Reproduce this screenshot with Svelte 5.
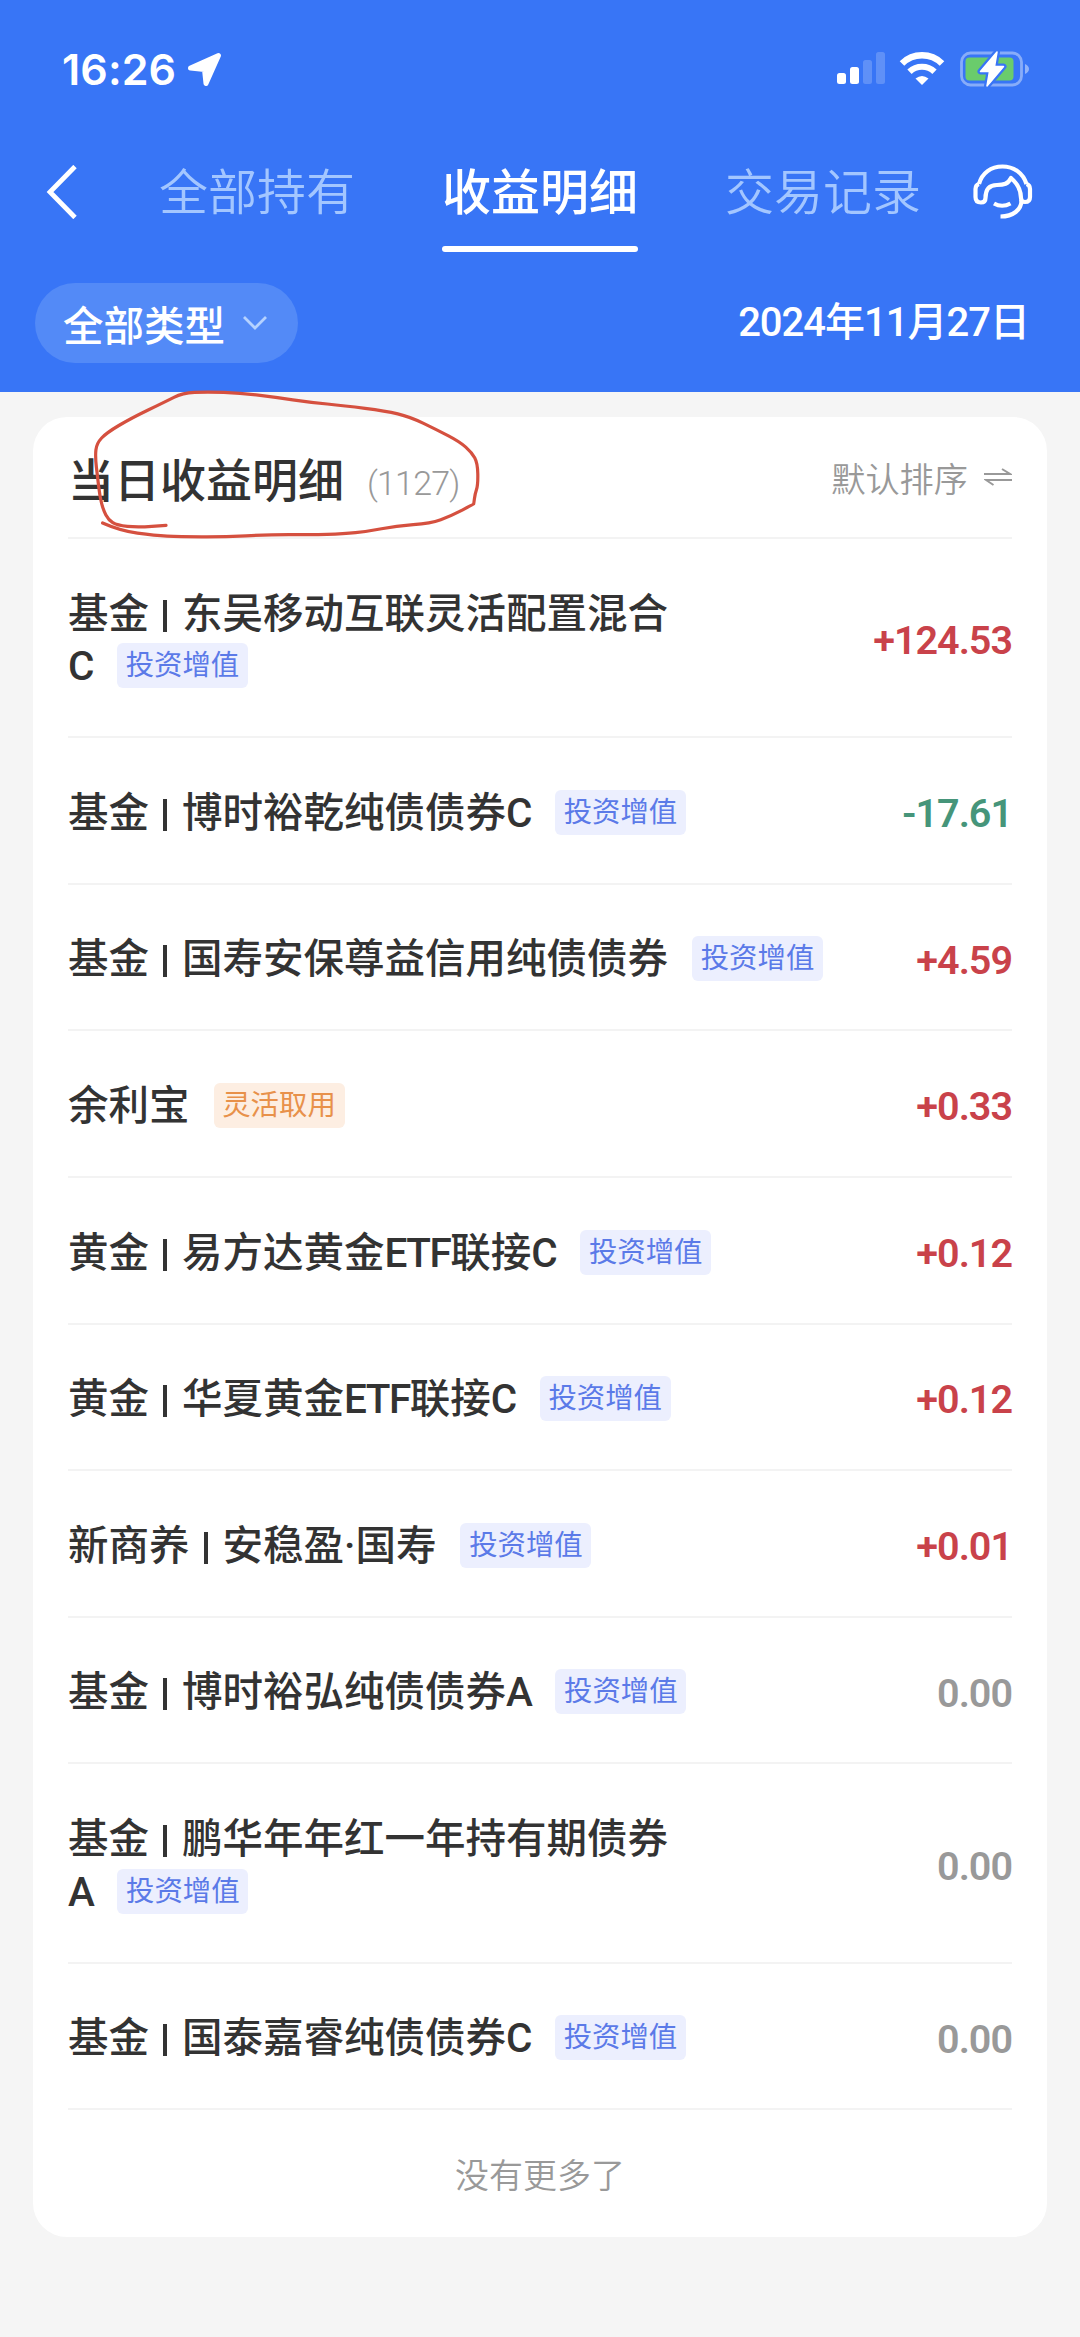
<script>

let { date = "2024年11月27日", total = 1127 } = $props()

let tabs = ["全部持有", "收益明细", "交易记录"]
let g_active_tab = $state("收益明细")

let g_rows = [
    { kind: "基金", name: "东吴移动互联灵活配置混合C", tag: "投资增值", amount: "+124.53" },
    { kind: "基金", name: "博时裕乾纯债债券C", tag: "投资增值", amount: "-17.61" },
    { kind: "基金", name: "国寿安保尊益信用纯债债券", tag: "投资增值", amount: "+4.59" },
    { kind: "", name: "余利宝", tag: "灵活取用", amount: "+0.33" },
    { kind: "黄金", name: "易方达黄金ETF联接C", tag: "投资增值", amount: "+0.12" },
    { kind: "黄金", name: "华夏黄金ETF联接C", tag: "投资增值", amount: "+0.12" },
    { kind: "新商养", name: "安稳盈·国寿", tag: "投资增值", amount: "+0.01" },
    { kind: "基金", name: "博时裕弘纯债债券A", tag: "投资增值", amount: "0.00" },
    { kind: "基金", name: "鹏华年年红一年持有期债券A", tag: "投资增值", amount: "0.00" },
    { kind: "基金", name: "国泰嘉睿纯债债券C", tag: "投资增值", amount: "0.00" }
]

const MAX_NAME = 12

function name_lines(name) {
    if ( name.length > MAX_NAME ) {
        return [name.slice(0,MAX_NAME), name.slice(MAX_NAME)]
    }
    return [name]
}

// latin runs are set a little tighter than the rest
function name_parts(line) {
    return line.split(/([A-Z]+)/).filter((part) => part.length)
}

function trend(amount) {
    if ( amount.startsWith("+") ) return "up"
    if ( amount.startsWith("-") ) return "down"
    return "flat"
}

// pen stroke around the section title
let g_pen_points = [
    [102.6,523],[120,530.7],[155,535.6],[179,536.7],[224,537],[268,534.7],[310,534.7],[344,534],[367,531.4],
    [396,526],[430.5,523.3],[451,516],[473.5,504.3],[473.8,503.8],[475,494],[478,485],[477.6,463],[471.8,452.5],[459.7,441.7],
    [437.3,430],[409.8,416.7],[385.7,411],[344.4,405.7],[310,402.3],[275.5,397.3],[241,393],[206.6,391.8],
    [182.5,393],[165.3,401.7],[131,418.3],[106.7,432.7],[96.6,443.3],[95.2,456.7],[97.5,476.7],[99.9,496.7],
    [103.3,510],[108.5,520],[117,525.4],[137.7,527.4],[166,525.3]
]

function smooth_path(pts) {
    let d = `M${pts[0][0]} ${pts[0][1]}`
    for ( let i = 1; i < pts.length - 1; i++ ) {
        let [x,y] = pts[i]
        let [nx,ny] = pts[i+1]
        d += ` Q${x} ${y} ${(x + nx)/2} ${(y + ny)/2}`
    }
    let last = pts[pts.length - 1]
    return d + ` L${last[0]} ${last[1]}`
}

</script>

<div class="screen">
    <header class="top">
        <div class="status-bar">
            <span class="clock">16:26</span>
            <svg class="locate" width="36" height="36" viewBox="0 0 36 36">
                <path d="M31.500 4.500 L19 32.500 L17.500 18.500 L3.500 17 Z" fill="#fff" stroke="#fff" stroke-width="5" stroke-linejoin="round" />
            </svg>
            <svg class="signal" width="48" height="34" viewBox="0 0 48 34">
                <rect x="0" y="21" width="9" height="11" rx="2.5" fill="#fff" />
                <rect x="13" y="15" width="9" height="17" rx="2.5" fill="#fff" />
                <rect x="26" y="8" width="9" height="24" rx="2.5" fill="#fff" opacity=".2" />
                <rect x="39" y="0" width="9" height="32" rx="2.5" fill="#fff" opacity=".2" />
            </svg>
            <svg class="wifi" width="46" height="34" viewBox="0 0 46 34">
                <path d="M3 11.500 A28.500 28.500 0 0 1 43 11.500" fill="none" stroke="#fff" stroke-width="6.500" />
                <path d="M10.500 19.800 A18 18 0 0 1 35.500 19.800" fill="none" stroke="#fff" stroke-width="6.200" />
                <path d="M23 33 L16.500 26.500 Q23 21.500 29.500 26.500 Z" fill="#fff" />
            </svg>
            <svg class="battery" width="70" height="38" viewBox="0 0 70 38">
                <rect x="1.500" y="3" width="60" height="32" rx="9" fill="none" stroke="#fff" stroke-opacity=".4" stroke-width="2.800" />
                <path d="M65 14 Q69 16 69 19 Q69 22 65 24 Z" fill="#fff" opacity=".45" />
                <rect x="5.500" y="7.500" width="48" height="23" rx="4" fill="#6acc6c" />
                <path d="M37 2 L20.500 21.500 H29.500 L27 36 L43.500 16.500 H34.500 Z" fill="#fff" stroke="#3875f6" stroke-width="6" stroke-linejoin="round" paint-order="stroke" />
                <path d="M37 2 L20.500 21.500 H29.500 L27 36 L43.500 16.500 H34.500 Z" fill="#fff" stroke="#fff" stroke-width="1.500" stroke-linejoin="round" />
            </svg>
        </div>

        <nav class="nav-bar">
            <svg class="back" width="32" height="54" viewBox="0 0 32 54">
                <path d="M29 1.500 L4 27 L29 52.500" fill="none" stroke="#fff" stroke-width="4.800" />
            </svg>
            <div class="tabs">
                {#each tabs as tab}
                <button class="tab" class:active={tab === g_active_tab} onclick={() => { g_active_tab = tab }}>{tab}</button>
                {/each}
            </div>
            <svg class="service" width="60" height="56" viewBox="0 0 60 56" fill="none" stroke="#fff" stroke-width="4.200" stroke-linejoin="round">
                <path d="M6 20 C9 9 18 2.500 29.500 2.500 C41 2.500 50 9 53.500 20" />
                <path d="M6 20 Q2.500 21 2.500 25 V33 Q2.500 38.500 8 38.500 Q12.500 38.500 12.500 34 C12.500 25 17 21 24 21 C31 21 35 20 38 14 C45 20 48 26 48 34 Q48 38 52 38 Q57 38 57 33 V25 Q57 21 53.500 20" />
                <path d="M48.500 36 C48.500 46 40 52.500 27.500 52.500" />
                <path d="M21 39.500 Q29 44 37.500 39.500" />
            </svg>
        </nav>

        <div class="filter-bar">
            <button class="type-filter">全部类型
                <svg width="24" height="16" viewBox="0 0 24 16"><path d="M1 2 L12 13 L23 2" fill="none" stroke="#b5d2ff" stroke-width="2.800" /></svg>
            </button>
            <span class="date">{date}</span>
        </div>
    </header>

    <main class="card">
        <div class="card-head">
            <h1>当日收益明细</h1>
            <span class="total">({total})</span>
            <span class="sort">默认排序</span>
            <svg class="sort-icon" width="28" height="20" viewBox="0 0 28 20" fill="none" stroke="#999" stroke-width="2">
                <path d="M0 7 H26 L18 2" />
                <path d="M28 13 H2 L9.500 18" />
            </svg>
        </div>

        {#each g_rows as row}
        {@const lines = name_lines(row.name)}
        <div class="row" class:tall={lines.length > 1}>
            <div class="name">
                {#if row.kind}{row.kind}<i class="bar"></i>{/if}{#each lines as line, i}{#if i > 0}<br>{/if}{#each name_parts(line) as part}<span class:latin={/[A-Z]/.test(part)}>{part}</span>{/each}{/each}<span class="tag" class:cash={row.tag === "灵活取用"}>{row.tag}</span>
            </div>
            <span class="amount {trend(row.amount)}">{row.amount}</span>
        </div>
        {/each}

        <div class="no-more">没有更多了</div>
    </main>

    <svg class="pen" width="1080" height="600" viewBox="0 0 1080 600">
        <path d={smooth_path(g_pen_points)} fill="none" stroke="#d5503f" stroke-width="3.200" stroke-linecap="round" stroke-linejoin="round" />
    </svg>
</div>

<style>

:global(body) {
    margin: 0;
    background: #f5f5f5;
}

.screen {
    position: relative;
    width: 1080px;
    height: 2337px;
    overflow: hidden;
    background: #f5f5f5;
    font-family: Roboto, "Noto Sans CJK SC", sans-serif;
    color: #333;
}

button {
    border: none;
    background: none;
    padding: 0;
    font: inherit;
    color: inherit;
}

svg {
    display: block;
    flex: none;
}

.top {
    box-sizing: border-box;
    height: 392px;
    background: #3875f6;
    color: #fff;
}

.status-bar {
    display: flex;
    align-items: center;
    height: 138px;
    padding: 0 50px 0 62px;
}

.clock {
    font-family: Inter, sans-serif;
    font-weight: 600;
    font-size: 43px;
    width: 125px;
    letter-spacing: 0.1px;
}

.signal {
    margin-left: auto;
}

.wifi {
    margin-left: 14px;
}

.battery {
    margin-left: 15px;
}

.nav-bar {
    display: flex;
    align-items: center;
    height: 114px;
    padding: 0 47px 0 46px;
}

.back {
    margin-bottom: 6px;
}

.tabs {
    display: flex;
    gap: 87px;
    margin-left: 81px;
    align-self: stretch;
}

.tab {
    display: flex;
    flex-direction: column;
    padding-top: 4px;
    font-size: 49px;
    line-height: 104px;
    color: #a3c6ff;
    font-weight: 350;
}

.tab.active {
    color: #fff;
    font-weight: 500;
}

.tab.active::after {
    content: "";
    height: 6px;
    width: 100%;
    border-radius: 3px;
    background: #fff;
}

.tab:not(.active) {
    padding-bottom: 6px;
}

.service {
    margin-left: auto;
    margin-bottom: 6px;
}

.filter-bar {
    display: flex;
    align-items: center;
    justify-content: space-between;
    margin-top: 31px;
    padding: 0 51px 0 35px;
}

.type-filter {
    display: flex;
    align-items: center;
    gap: 18px;
    box-sizing: border-box;
    width: 263px;
    height: 80px;
    padding-left: 28px;
    border-radius: 40px;
    background: #538af7;
    font-size: 40.500px;
    font-weight: 500;
}

.date {
    margin-bottom: 8px;
    font-size: 40px;
    font-weight: 500;
    letter-spacing: -1px;
}

.card {
    margin: 25px 33px 0;
    padding: 0 35px;
    height: 1820px;
    box-sizing: border-box;
    border-radius: 34px;
    background: #fff;
}

.card-head {
    display: flex;
    align-items: center;
    box-sizing: border-box;
    height: 122px;
    border-bottom: 2px solid #f3f3f3;
}

h1 {
    margin: 0;
    font-size: 46px;
    font-weight: 500;
}

.total {
    margin: 11px 0 0 23px;
    font-size: 34px;
    font-weight: 350;
    letter-spacing: -0.800px;
    color: #999;
}

.sort {
    margin-left: auto;
    font-size: 34.200px;
    font-weight: 350;
    color: #999;
}

.sort-icon {
    margin-left: 16px;
}

.row {
    display: flex;
    align-items: center;
    justify-content: space-between;
    box-sizing: border-box;
    height: 146.600px;
    border-bottom: 2px solid #f3f3f3;
}

.row.tall {
    height: 199.300px;
}

.name {
    padding-top: 5px;
    font-size: 40.500px;
    line-height: 52.600px;
    font-weight: 500;
    white-space: nowrap;
}

.latin {
    letter-spacing: -1.500px;
}

.bar {
    display: inline-block;
    width: 4px;
    height: 32px;
    margin: 0 15px 0 14px;
    background: #333;
    vertical-align: -4px;
}

.tag {
    display: inline-block;
    margin-left: 24px;
    width: 131px;
    height: 45px;
    border-radius: 6px;
    background: #eceffe;
    color: #5b7ae8;
    font-size: 28.400px;
    font-weight: 400;
    line-height: 45px;
    text-align: center;
    vertical-align: 5px;
}

.tag.cash {
    background: #fdeee2;
    color: #e8914a;
}

.amount {
    margin-top: 6px;
    font-size: 39.500px;
    font-weight: 600;
    letter-spacing: -1px;
}

.amount.up {
    color: #c9424a;
}

.amount.down {
    color: #46957a;
}

.amount.flat {
    color: #999;
}

.no-more {
    line-height: 133px;
    text-align: center;
    font-size: 34px;
    font-weight: 350;
    color: #999;
}

.pen {
    position: absolute;
    left: 0;
    top: 0;
    pointer-events: none;
}

</style>
